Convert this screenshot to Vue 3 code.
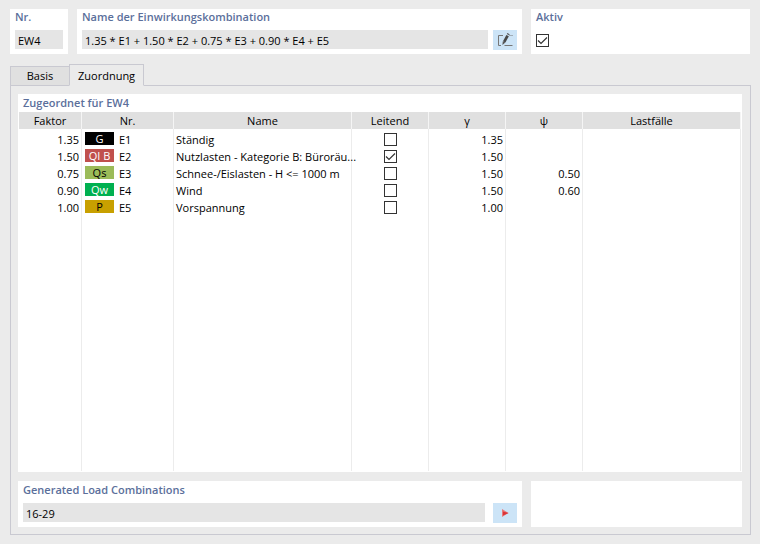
<script setup>
import { ref } from 'vue'

const number = ref('EW4')
const combinationName = ref('1.35 * E1 + 1.50 * E2 + 0.75 * E3 + 0.90 * E4 + E5')
const active = ref(true)
const generated = ref('16-29')
const tab = ref('Zuordnung')

const columns = [
  { title: 'Faktor', cls: 'col-factor' },
  { title: 'Nr.', cls: 'col-number' },
  { title: 'Name', cls: 'col-name' },
  { title: 'Leitend', cls: 'col-value' },
  { title: 'γ', cls: 'col-value' },
  { title: 'ψ', cls: 'col-value' },
  { title: 'Lastfälle', cls: 'col-cases' }
]

const rows = ref([
  { factor: '1.35', tag: 'G', kind: 'tag-g', id: 'E1', name: 'Ständig', leading: false, gamma: '1.35', psi: '' },
  { factor: '1.50', tag: 'QI B', kind: 'tag-qi', id: 'E2', name: 'Nutzlasten - Kategorie B: Büroräu...', leading: true, gamma: '1.50', psi: '' },
  { factor: '0.75', tag: 'Qs', kind: 'tag-qs', id: 'E3', name: 'Schnee-/Eislasten - H <= 1000 m', leading: false, gamma: '1.50', psi: '0.50' },
  { factor: '0.90', tag: 'Qw', kind: 'tag-qw', id: 'E4', name: 'Wind', leading: false, gamma: '1.50', psi: '0.60' },
  { factor: '1.00', tag: 'P', kind: 'tag-p', id: 'E5', name: 'Vorspannung', leading: false, gamma: '1.00', psi: '' }
])
</script>

<template>
  <main class="page">
    <header class="top">
      <section class="panel field-panel">
        <label class="title" for="number">Nr.</label>
        <input id="number" v-model="number" class="text-field" type="text" readonly />
      </section>
      <section class="panel field-panel">
        <label class="title" for="name">Name der Einwirkungskombination</label>
        <div class="field-row">
          <input id="name" v-model="combinationName" class="text-field" type="text" readonly />
          <button class="tool" type="button" aria-label="Name bearbeiten">
            <svg width="18" height="16" viewBox="0 0 18 16" fill="none">
              <path d="M7 3.500H2.500V13.500H5M8.500 13.500H16.500M13.500 3.500H14.500M15.500 3.500H16.500" stroke="#777" />
              <path d="M11.600 3.600 8.200 9.800" stroke="#484848" stroke-width="2.800" />
              <path d="M6.800 9.200 9.400 10.600 6.400 13Z" fill="#555" />
              <path d="M11.300 1 13.700 2.300 13.100 3.300 10.800 2Z" fill="#555" />
            </svg>
          </button>
        </div>
      </section>
      <section class="panel field-panel">
        <label class="title" for="active">Aktiv</label>
        <div class="check-row">
          <input id="active" v-model="active" class="check" type="checkbox" />
        </div>
      </section>
    </header>

    <nav class="tabs" role="tablist">
      <button
        v-for="name in ['Basis', 'Zuordnung']"
        :key="name"
        class="tab"
        :class="{ selected: tab === name }"
        type="button"
        role="tab"
        :aria-selected="tab === name"
        @click="tab = name"
      >{{ name }}</button>
    </nav>

    <div class="tab-body" role="tabpanel">
      <section class="panel table-panel">
        <h2 id="assigned" class="title table-title">Zugeordnet für EW4</h2>
        <table aria-labelledby="assigned">
          <colgroup>
            <col v-for="c in columns" :key="c.title" :class="c.cls" />
          </colgroup>
          <thead>
            <tr>
              <th v-for="c in columns" :key="c.title" scope="col">{{ c.title }}</th>
            </tr>
          </thead>
          <tbody>
            <tr v-for="row in rows" :key="row.id" class="row">
              <td class="num">{{ row.factor }}</td>
              <td>
                <div class="ident"><span class="tag" :class="row.kind">{{ row.tag }}</span>{{ row.id }}</div>
              </td>
              <td class="name">{{ row.name }}</td>
              <td>
                <div class="center">
                  <input v-model="row.leading" class="check" type="checkbox" :aria-label="'Leitend ' + row.id" />
                </div>
              </td>
              <td class="num">{{ row.gamma }}</td>
              <td class="num">{{ row.psi }}</td>
              <td></td>
            </tr>
            <tr class="rest">
              <td v-for="c in columns" :key="c.title"></td>
            </tr>
          </tbody>
        </table>
      </section>

      <div class="bottom">
        <section class="panel field-panel">
          <label class="title" for="generated">Generated Load Combinations</label>
          <div class="field-row">
            <input id="generated" v-model="generated" class="text-field" type="text" readonly />
            <button class="tool" type="button" aria-label="Lastkombinationen anzeigen">
              <svg width="8" height="8" viewBox="0 0 8 8">
                <path d="M1 0 7.500 4 1 8Z" fill="#e87878" />
                <path d="M2 2.500 7.500 4 2 6.500Z" fill="#d93338" />
              </svg>
            </button>
          </div>
        </section>
        <section class="panel"></section>
      </div>
    </div>
  </main>
</template>

<style>
body {
  margin: 0;
  background: #ebebeb;
}
</style>

<style scoped>
.page {
  box-sizing: border-box;
  min-height: 100vh;
  display: flex;
  flex-direction: column;
  padding: 9px 9px 9px 10px;
  background: #ebebeb;
  color: #000;
  font: 11px/16px "Open Sans", "Noto Sans", sans-serif;
}
input,
button {
  font: inherit;
  color: inherit;
  margin: 0;
  border: 0;
  border-radius: 0;
}
.top {
  display: grid;
  grid-template-columns: 58px minmax(0, 445fr) minmax(0, 219fr);
  gap: 9px;
  padding-right: 1px;
}
.panel {
  background: #fff;
}
.field-panel {
  display: flex;
  flex-direction: column;
  gap: 5px;
  padding: 0 5px 4px;
}
.title {
  margin: 0;
  color: #5b6f9b;
  font-size: 11px;
  font-weight: 600;
  line-height: 16px;
}
.field-row {
  display: flex;
  gap: 5px;
}
.bottom .field-panel {
  padding-top: 1px;
}
.bottom .field-row {
  gap: 8px;
}
.text-field {
  box-sizing: border-box;
  width: 100%;
  min-width: 0;
  height: 19px;
  padding: 2px 3px 0;
  background: #e5e5e5;
  outline: 0;
}
.tool {
  flex: none;
  display: flex;
  align-items: center;
  justify-content: center;
  width: 24px;
  height: 20px;
  padding: 0;
  background: #cce4f7;
}
.check-row {
  display: flex;
  align-items: center;
  height: 20px;
}
.check {
  appearance: none;
  box-sizing: border-box;
  width: 13px;
  height: 13px;
  border: 1px solid #333;
  background: #fff;
}
.check:checked {
  background: #fff url("data:image/svg+xml,%3Csvg xmlns='http://www.w3.org/2000/svg' viewBox='0 0 11 11'%3E%3Cpath d='M1 5.500 4 8.500 10 2.500' fill='none' stroke='%23333' stroke-width='1.200'/%3E%3C/svg%3E") center / 11px 11px no-repeat;
}
.tabs {
  position: relative;
  z-index: 1;
  display: flex;
  align-items: flex-end;
  margin: 10px 0 -1px;
}
.tab {
  box-sizing: border-box;
  min-width: 59px;
  height: 20px;
  padding: 0 7px;
  border: 1px solid #c9c9d1;
  border-right: 0;
  background: #e0e0e0;
}
.tab.selected {
  height: 22px;
  padding: 1px 8px 0;
  border-right: 1px solid #c9c9d1;
  border-bottom-color: #ebebeb;
  background: #ebebeb;
}
.tab-body {
  flex: 1;
  display: flex;
  flex-direction: column;
  gap: 9px;
  padding: 8px 8px 7px 7px;
  border: 1px solid #c9c9d1;
}
.table-panel {
  flex: 1;
  display: grid;
  grid-template-rows: auto 1fr;
  padding: 0 1px 1px;
}
.table-title {
  padding: 1px 4px;
}
table {
  width: 100%;
  height: 100%;
  table-layout: fixed;
  border-collapse: separate;
  border-spacing: 0;
}
.col-factor {
  width: 63px;
}
.col-number {
  width: 92px;
}
.col-name {
  width: 178px;
}
.col-value {
  width: 77px;
}
th {
  height: 17px;
  padding: 0;
  border-right: 1px solid #f5f5f5;
  background: #e0e0e0;
  font-weight: 500;
  line-height: 17px;
}
th:last-child {
  padding-right: 20px;
}
td {
  height: 17px;
  padding: 0;
  border-right: 1px solid #ececec;
  line-height: 17px;
  white-space: nowrap;
}
.row:first-child td {
  padding-top: 2px;
}
.rest td {
  height: auto;
}
.num {
  padding-right: 2px;
  text-align: right;
}
.name {
  padding-left: 2px;
}
.ident {
  display: flex;
  align-items: center;
  gap: 5px;
  height: 17px;
  padding-left: 3px;
}
.tag {
  width: 29px;
  height: 13px;
  margin-bottom: 2px;
  line-height: 13px;
  text-align: center;
}
.tag-g {
  background: #000;
  color: #fff;
}
.tag-qi {
  background: #c0504d;
  color: #fff;
}
.tag-qs {
  background: #9bbb59;
}
.tag-qw {
  background: #00b050;
  color: #fff;
}
.tag-p {
  background: #c8a000;
}
.center {
  display: flex;
  align-items: center;
  justify-content: center;
  height: 17px;
}
.bottom {
  display: grid;
  grid-template-columns: minmax(0, 504fr) minmax(0, 211fr);
  gap: 9px;
}
</style>
